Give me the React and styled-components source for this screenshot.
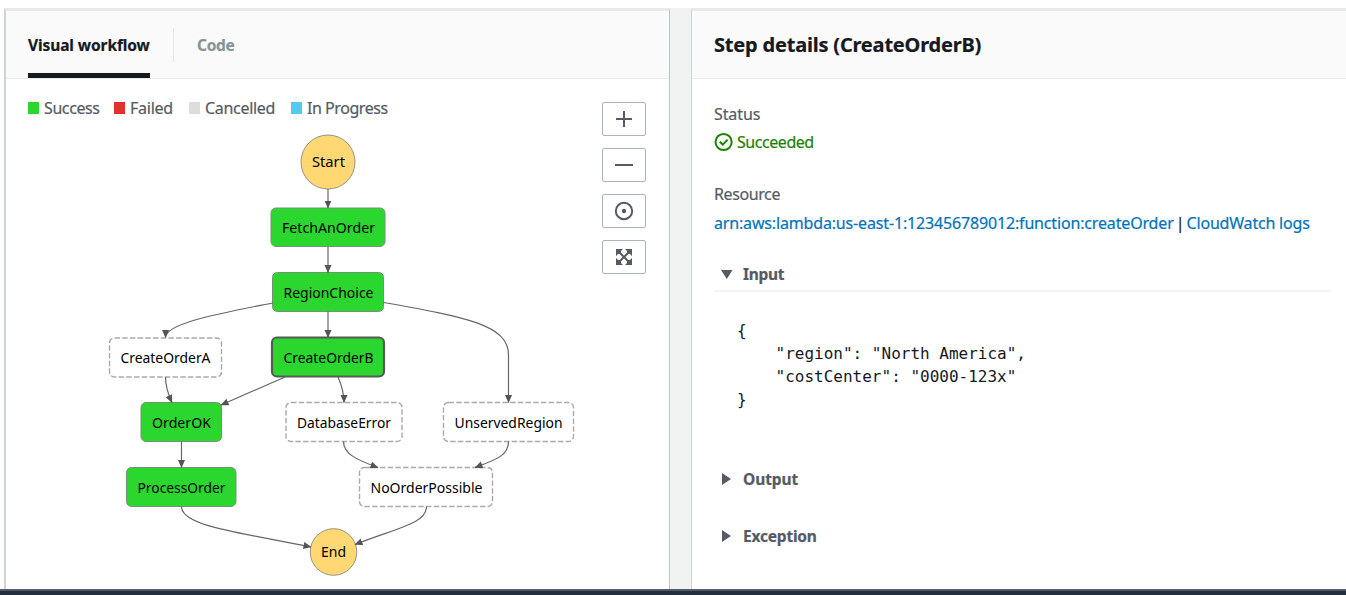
import React from "react";
import styled, { createGlobalStyle } from "styled-components";

const GlobalStyle = createGlobalStyle`
  * { box-sizing: border-box; }
  body {
    margin: 0;
    background: #fff;
    color: #16191f;
    font-family: "Noto Sans", "Open Sans", sans-serif;
    -webkit-text-stroke: 0.2px;
    overflow: hidden;
  }
`;

const Page = styled.div`
  display: flex;
  flex-direction: column;
  width: 1346px;
  height: 595px;
  padding-top: 8px;
`;

const Columns = styled.main`
  display: flex;
  flex: 1;
  min-height: 0;
  margin-left: 4px;
  gap: 21px;
  background: #f1f3f3;
`;

const Panel = styled.section`
  display: flex;
  flex-direction: column;
  width: ${(p) => p.$width || "auto"};
  flex: ${(p) => (p.$width ? "none" : 1)};
  border-top: 3px solid #e6eaea;
  border-left: ${(p) => (p.$width ? 2 : 1)}px solid #cdd4d5;
  border-right: ${(p) => (p.$width ? "1px solid #bcc4c6" : "none")};
  background: #fff;
`;

const PanelHeader = styled.header`
  display: flex;
  height: 68px;
  flex: none;
  padding-left: 22px;
  background: #fafafa;
  border-bottom: 1px solid #eaeded;
`;

const Tab = styled.div`
  display: flex;
  align-items: center;
  height: 67px;
  padding-top: 5px;
  font-size: 15.5px;
  font-weight: 700;
  line-height: 20px;
  letter-spacing: ${(p) => p.$spacing}px;
  white-space: nowrap;
  color: ${(p) => (p.$active ? "#16191f" : "#879596")};
  border-bottom: 5px solid ${(p) => (p.$active ? "#16191f" : "transparent")};
  width: ${(p) => p.$width}px;
`;

const TabDivider = styled.div`
  width: 1px;
  height: 34px;
  margin: 17px 23px 0;
  background: #e3e7e7;
`;

const Title = styled.h2`
  margin: 0;
  line-height: 67px;
  font-size: 20px;
  font-weight: 700;
  letter-spacing: ${(p) => p.$spacing}px;
`;

const WorkflowBody = styled.div`
  display: flex;
  flex: 1;
  min-height: 0;
  justify-content: space-between;
  padding: 0 23px 0 22px;
`;

const GraphColumn = styled.div`
  display: flex;
  flex-direction: column;
`;

const Legend = styled.div`
  display: flex;
  height: 20px;
  margin-top: 19px;
`;

const LegendItem = styled.span`
  display: flex;
  align-items: center;
  gap: 5px;
  width: ${(p) => p.$width}px;
  font-size: 16px;
  line-height: 20px;
  letter-spacing: ${(p) => p.$spacing}px;
  white-space: nowrap;
  color: #545b64;
`;

const Swatch = styled.i`
  width: 11px;
  height: 12px;
  flex: none;
  background: ${(p) => p.$color};
`;

const Graph = styled.svg`
  display: block;
  width: 560px;
  height: 471px;
  font-family: "Noto Sans", "Open Sans", sans-serif;
`;

const Edge = styled.path`
  fill: none;
  stroke: #666;
  stroke-width: 1.2;
  marker-end: url(#arrow);
`;

const Box = styled.rect`
  fill: ${(p) => (p.$state === "idle" ? "#fff" : "#2bd62e")};
  stroke: ${(p) => ({ idle: "#aaa", done: "#749374", selected: "#545b54" })[p.$state]};
  stroke-width: ${(p) => ({ idle: 1.4, done: 1, selected: 2.2 })[p.$state]};
  stroke-dasharray: ${(p) => (p.$state === "idle" ? "5.5 2.2" : "none")};
`;

const Terminal = styled.circle`
  fill: #ffd873;
  stroke: #999285;
  stroke-width: 1;
`;

const NodeLabel = styled.text`
  fill: #000;
  font-size: 14px;
`;

const Controls = styled.div`
  display: flex;
  flex-direction: column;
  gap: 12px;
  margin-top: 23px;
`;

const ControlButton = styled.button`
  display: flex;
  align-items: center;
  justify-content: center;
  width: 44px;
  height: 34px;
  padding: 0;
  background: #fff;
  border: 1px solid #aab7b8;
  border-radius: 2px;
`;

const ControlIcon = styled.svg`
  width: 20px;
  height: 20px;
  fill: none;
  stroke: #545b64;
  stroke-width: 2;
`;

const DetailsBody = styled.div`
  display: flex;
  flex-direction: column;
  padding: 24px 15px 0 22px;
`;

const Line = styled.div`
  display: flex;
  align-items: center;
  height: 22px;
  margin-top: ${(p) => p.$top || 0}px;
  font-size: 16px;
  line-height: 22px;
  white-space: nowrap;
  letter-spacing: ${(p) => p.$spacing || 0}px;
  color: ${(p) => p.$color || "#545b64"};
`;

const StatusIcon = styled.svg`
  width: 20px;
  height: 20px;
  margin-right: 3px;
  fill: none;
  stroke: #1d8102;
  stroke-width: 2;
`;

const Link = styled.a`
  color: #0073bb;
  letter-spacing: ${(p) => p.$spacing}px;
`;

const Pipe = styled.span`
  width: 13px;
  text-align: center;
  color: #16191f;
`;

const SectionToggle = styled.div`
  display: flex;
  align-items: center;
  height: ${(p) => p.$height}px;
  margin-top: ${(p) => p.$top}px;
  padding-left: 7px;
  gap: 9px;
  font-size: 15.5px;
  font-weight: 700;
  letter-spacing: ${(p) => p.$spacing}px;
  color: #545b64;
  border-bottom: ${(p) => (p.$open ? "2px solid #f2f3f3" : "none")};
`;

const Caret = styled.svg`
  width: 13px;
  height: 14px;
  fill: #545b64;
`;

const Code = styled.pre`
  height: 92px;
  margin: 27px 0 0 23px;
  font-family: "DejaVu Sans Mono", monospace;
  font-size: 16px;
  line-height: 23px;
  color: #16191f;
  -webkit-text-stroke: 0;
`;

const Footer = styled.footer`
  height: 6px;
  flex: none;
  background: #232f3e;
  border-top: 2px solid #545b64;
`;

const legend = [
  { label: "Success", color: "#2bd62e", width: 86, spacing: -0.4 },
  { label: "Failed", color: "#e0332e", width: 75, spacing: -0.25 },
  { label: "Cancelled", color: "#ddd", width: 102, spacing: -0.3 },
  { label: "In Progress", color: "#53c9ed", width: 110, spacing: -0.45 },
];

const nodes = [
  { name: "FetchAnOrder", x: 271, y: 208, w: 114, h: 38.5, tx: 282, tw: 93, state: "done" },
  { name: "RegionChoice", x: 272.5, y: 272.5, w: 111, h: 39, tx: 283.5, tw: 90, state: "done" },
  { name: "CreateOrderA", x: 109.5, y: 338, w: 112, h: 39, tx: 120.5, tw: 90, state: "idle" },
  { name: "CreateOrderB", x: 272, y: 337.5, w: 112, h: 39, tx: 283.5, tw: 90, state: "selected" },
  { name: "OrderOK", x: 141, y: 402.5, w: 80.5, h: 39, tx: 152, tw: 59, state: "done" },
  { name: "DatabaseError", x: 286, y: 402.5, w: 116, h: 39, tx: 297, tw: 94, state: "idle" },
  { name: "UnservedRegion", x: 443.5, y: 402.5, w: 130, h: 39, tx: 454.5, tw: 108, state: "idle" },
  { name: "ProcessOrder", x: 126.5, y: 467.5, w: 109.5, h: 39, tx: 137.5, tw: 88, state: "done" },
  { name: "NoOrderPossible", x: 359.5, y: 467.5, w: 133, h: 39, tx: 370.5, tw: 112, state: "idle" },
];

const terminals = [
  { name: "Start", cx: 328, cy: 162, r: 27, tx: 312, tw: 33 },
  { name: "End", cx: 333.5, cy: 552, r: 23.3, tx: 321, tw: 25 },
];

const edges = [
  "M328 189V208",
  "M328 246.5V272.5",
  "M328 311.5V337.5",
  "M272.5 303C222 313 165.5 323 165.5 337.5",
  "M383.5 302.5C466 317 508.5 325 508.5 355V402.5",
  "M165.5 377C165.5 386 167.5 393 172 402.5",
  "M285 377L221 405",
  "M338 377C342 386 344 392 344 402.5",
  "M181.5 441.5V467.5",
  "M343.5 441.5C343.5 454 357 460 378 467.5",
  "M508.5 441.5C508.5 456 495 460 475 467.5",
  "M181.5 506.5C181.5 525 230 531 311 547",
  "M426.5 506.5C426.5 524 396 528 355 544.5",
];

export default function App() {
  return (
    <>
      <GlobalStyle />
      <Page>
        <Columns>
          <Panel $width="666px">
            <PanelHeader>
              <Tab $active $width={122} $spacing={-0.1}>Visual workflow</Tab>
              <TabDivider />
              <Tab $width={40} $spacing={-0.3}>Code</Tab>
            </PanelHeader>
            <WorkflowBody>
              <GraphColumn>
                <Legend>
                  {legend.map((item) => (
                    <LegendItem key={item.label} $width={item.width} $spacing={item.spacing}>
                      <Swatch $color={item.color} />
                      {item.label}
                    </LegendItem>
                  ))}
                </Legend>
                <Graph viewBox="28 118 560 471">
                  <defs>
                    <marker id="arrow" markerUnits="userSpaceOnUse" markerWidth="9" markerHeight="8" refX="7.5" refY="3.5" orient="auto">
                      <path d="M0 0L8 3.5L0 7Z" fill="#545454" />
                    </marker>
                  </defs>
                  {nodes.map((n) => (
                    <g key={n.name}>
                      <Box x={n.x} y={n.y} width={n.w} height={n.h} rx="5" $state={n.state} />
                      <NodeLabel x={n.tx} y={n.y + 25} textLength={n.tw} lengthAdjust="spacingAndGlyphs">{n.name}</NodeLabel>
                    </g>
                  ))}
                  {terminals.map((t) => (
                    <g key={t.name}>
                      <Terminal cx={t.cx} cy={t.cy} r={t.r} />
                      <NodeLabel x={t.tx} y={t.cy + 5} textLength={t.tw} lengthAdjust="spacingAndGlyphs">{t.name}</NodeLabel>
                    </g>
                  ))}
                  {edges.map((d) => <Edge key={d} d={d} />)}
                </Graph>
              </GraphColumn>
              <Controls>
                <ControlButton aria-label="Zoom in">
                  <ControlIcon viewBox="0 0 20 20"><path d="M10 2V18M2 10H18" /></ControlIcon>
                </ControlButton>
                <ControlButton aria-label="Zoom out">
                  <ControlIcon viewBox="0 0 20 20"><path d="M1 10H19" /></ControlIcon>
                </ControlButton>
                <ControlButton aria-label="Center">
                  <ControlIcon viewBox="0 0 20 20">
                    <circle cx="10" cy="10" r="8.2" />
                    <circle cx="10" cy="10" r="2.2" fill="#545b64" stroke="none" />
                  </ControlIcon>
                </ControlButton>
                <ControlButton aria-label="Fit to screen">
                  <ControlIcon viewBox="0 0 20 20">
                    <path d="M4 4L16 16M16 4L4 16" />
                    <path d="M2 2H9L7 4L7 7L4 7L2 9ZM11 2H18V9L16 7H13V4ZM18 11V18H11L13 16V13H16ZM9 18H2V11L4 13H7V16Z" fill="#545b64" stroke="none" />
                  </ControlIcon>
                </ControlButton>
              </Controls>
            </WorkflowBody>
          </Panel>
          <Panel>
            <PanelHeader>
              <Title $spacing={-0.2}>Step details (CreateOrderB)</Title>
            </PanelHeader>
            <DetailsBody>
              <Line $spacing={-0.1}>Status</Line>
              <Line $top={6} $color="#1d8102" $spacing={-0.45}>
                <StatusIcon viewBox="0 0 20 20">
                  <circle cx="9.6" cy="10" r="8.1" />
                  <path d="M5.8 9.8L8.8 12.6L13.6 7.6" />
                </StatusIcon>
                Succeeded
              </Line>
              <Line $top={30} $spacing={-0.4}>Resource</Line>
              <Line $top={7}>
                <Link $spacing={-0.16}>arn:aws:lambda:us-east-1:123456789012:function:createOrder</Link>
                <Pipe>|</Pipe>
                <Link $spacing={-0.2}>CloudWatch logs</Link>
              </Line>
              <SectionToggle $open $height={35} $top={23} $spacing={-0.3}>
                <Caret viewBox="0 0 13 14"><path d="M0 3H11.5L5.8 12Z" /></Caret>
                Input
              </SectionToggle>
              <Code>{`{
    "region": "North America",
    "costCenter": "0000-123x"
}`}</Code>
              <SectionToggle $height={24} $top={56} $spacing={-0.1}>
                <Caret viewBox="0 0 13 14"><path d="M1 1L10 7L1 13Z" /></Caret>
                Output
              </SectionToggle>
              <SectionToggle $height={24} $top={33} $spacing={-0.2}>
                <Caret viewBox="0 0 13 14"><path d="M1 1L10 7L1 13Z" /></Caret>
                Exception
              </SectionToggle>
            </DetailsBody>
          </Panel>
        </Columns>
        <Footer />
      </Page>
    </>
  );
}
